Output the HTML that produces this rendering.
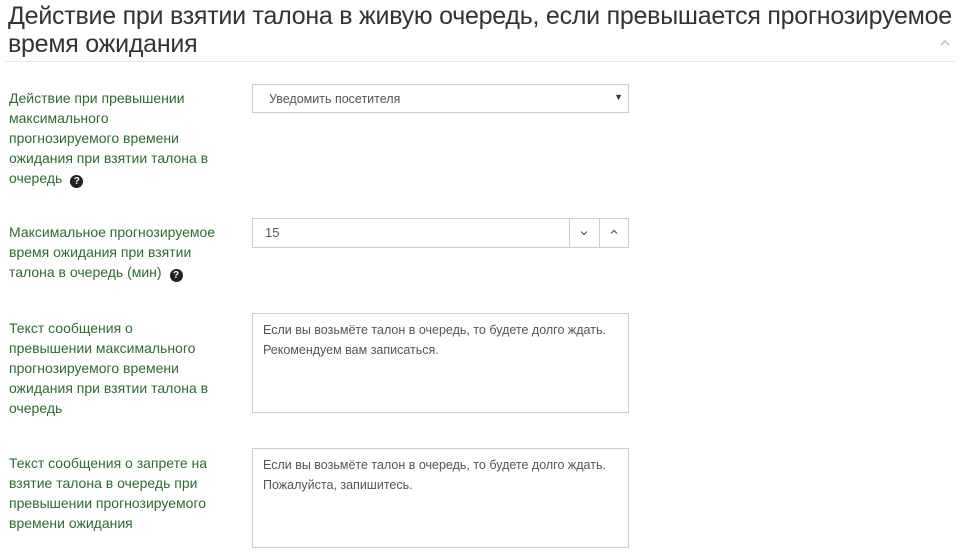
<!DOCTYPE html>
<html><head><meta charset="utf-8"><style>
*{margin:0;padding:0;box-sizing:border-box}
body{width:977px;height:554px;background:#fff;font-family:"Liberation Sans",sans-serif;position:relative;overflow:hidden}
.t{position:absolute;left:8px;top:2px;font-size:25px;line-height:28px;color:#333;letter-spacing:-0.25px;width:970px;white-space:nowrap}
.hr{position:absolute;left:5px;top:61px;width:950px;height:1px;background:#e8e8e8}
.car{position:absolute;left:939px;top:38px;width:12px;height:10px}
.l{position:absolute;left:9px;font-size:14px;line-height:20px;color:#2e6b30;white-space:nowrap}
.q{display:inline-block;width:13px;height:13px;border-radius:50%;background:#222;color:#fff;font-size:10px;line-height:13px;text-align:center;font-weight:bold;margin-left:8px;vertical-align:-1px}
.box{position:absolute;left:252px;width:377px;border:1px solid #ccc;background:#fff;font-size:12.5px;color:#555}
</style></head><body>
<div class="t">Действие при взятии талона в живую очередь, если превышается прогнозируемое<br>время ожидания</div>
<svg class="car" viewBox="0 0 12 10"><path d="M2 7 L6 3 L10 7" stroke="#ccc" stroke-width="2" fill="none"/></svg>
<div class="hr"></div>

<div class="l" style="top:88px">Действие при превышении<br>максимального<br>прогнозируемого времени<br>ожидания при взятии талона в<br>очередь<span class="q">?</span></div>
<div class="box" style="top:84px;height:29px;padding:7px 0 0 16px">Уведомить посетителя<span style="position:absolute;right:5px;top:7px;font-size:9px;color:#333">▼</span></div>

<div class="l" style="top:222px">Максимальное прогнозируемое<br>время ожидания при взятии<br>талона в очередь (мин)<span class="q">?</span></div>
<div class="box" style="top:218px;height:30px;padding:6px 0 0 12px;font-size:13px">15
<div style="position:absolute;left:316px;top:0;width:1px;height:28px;background:#ccc"></div>
<div style="position:absolute;left:346px;top:0;width:1px;height:28px;background:#ccc"></div>
<svg style="position:absolute;left:327px;top:11px" width="8" height="6" viewBox="0 0 8 6"><path d="M1 1.5 L4 4.5 L7 1.5" stroke="#555" stroke-width="1.2" fill="none"/></svg>
<svg style="position:absolute;left:357px;top:10px" width="8" height="6" viewBox="0 0 8 6"><path d="M1 4.5 L4 1.5 L7 4.5" stroke="#555" stroke-width="1.2" fill="none"/></svg>
</div>

<div class="l" style="top:318px">Текст сообщения о<br>превышении максимального<br>прогнозируемого времени<br>ожидания при взятии талона в<br>очередь</div>
<div class="box" style="top:313px;height:100px;padding:6px 10px;line-height:20px">Если вы возьмёте талон в очередь, то будете долго ждать.<br>Рекомендуем вам записаться.</div>

<div class="l" style="top:453px">Текст сообщения о запрете на<br>взятие талона в очередь при<br>превышении прогнозируемого<br>времени ожидания</div>
<div class="box" style="top:448px;height:100px;padding:6px 10px;line-height:20px">Если вы возьмёте талон в очередь, то будете долго ждать.<br>Пожалуйста, запишитесь.</div>
</body></html>
